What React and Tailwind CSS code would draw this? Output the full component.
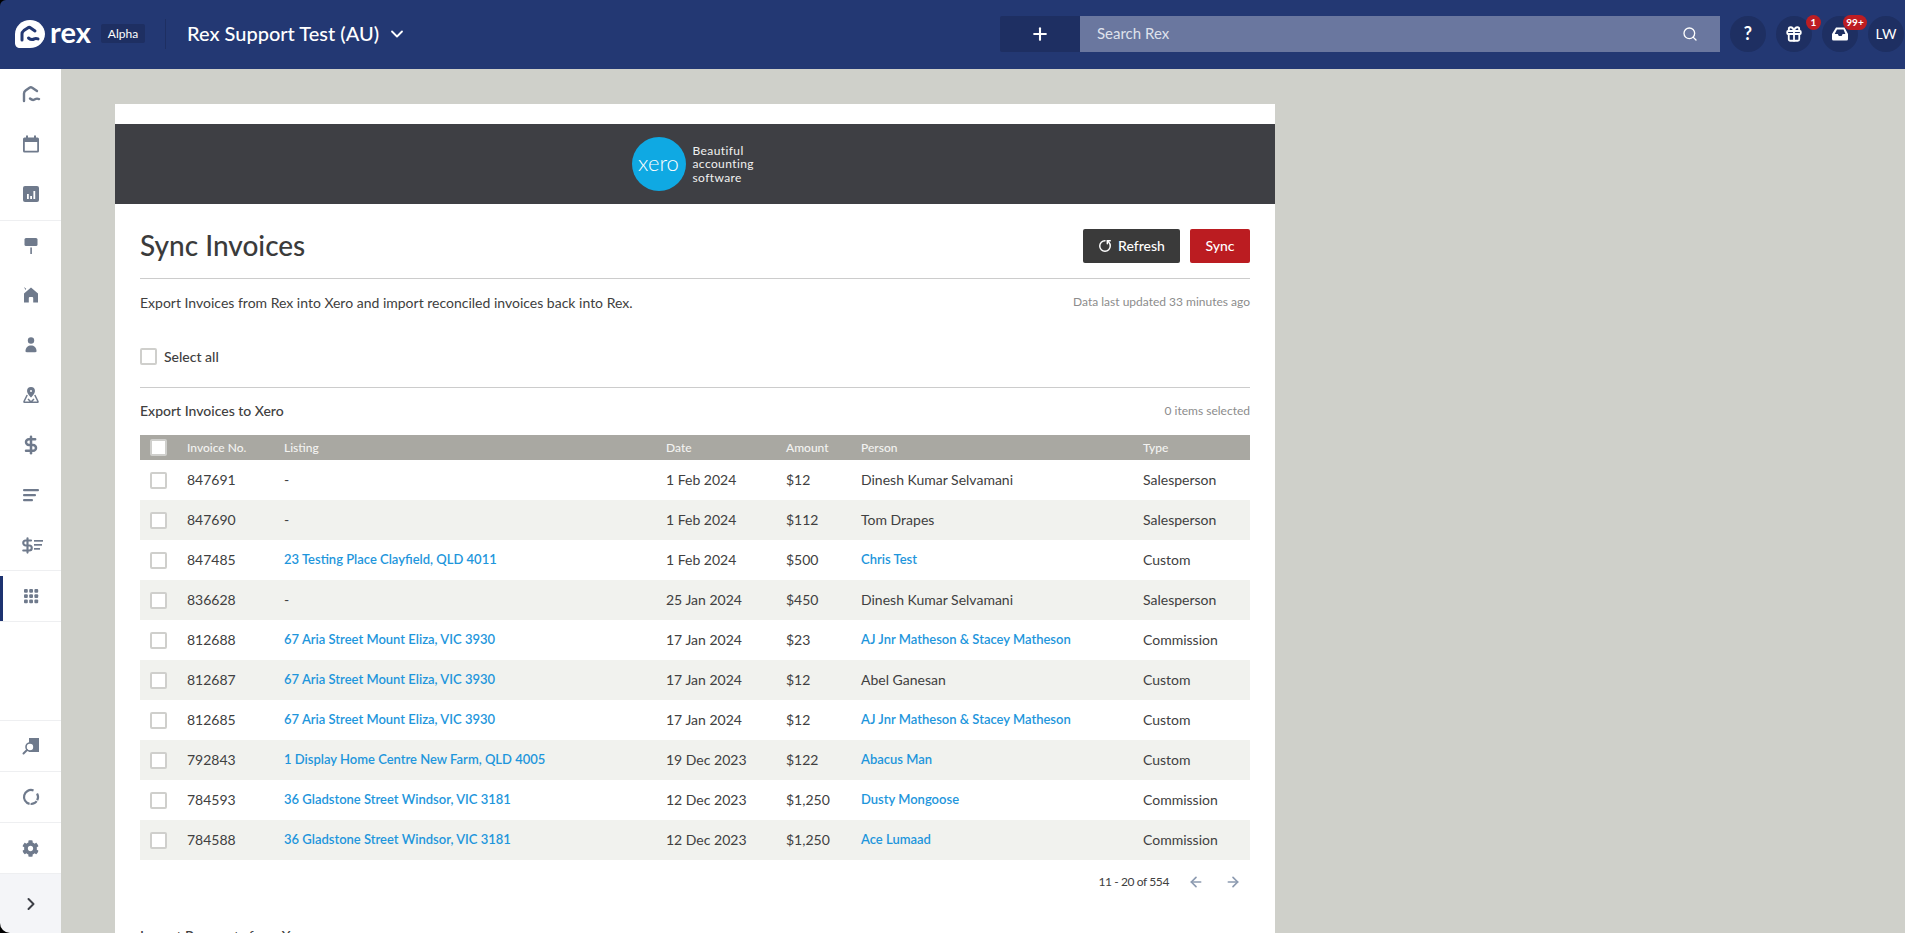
import React from 'react'
import { ChevronDown, ChevronRight, Plus, Search, Gift, RotateCw, ArrowLeft, ArrowRight, DollarSign } from 'lucide-react'
import { FaCog } from 'react-icons/fa'

const ROWS = [
  { no: '847691', listing: '-', date: '1 Feb 2024', amount: '$12', person: 'Dinesh Kumar Selvamani', type: 'Salesperson' },
  { no: '847690', listing: '-', date: '1 Feb 2024', amount: '$112', person: 'Tom Drapes', type: 'Salesperson' },
  { no: '847485', listing: '23 Testing Place Clayfield, QLD 4011', link: true, date: '1 Feb 2024', amount: '$500', person: 'Chris Test', personLink: true, type: 'Custom' },
  { no: '836628', listing: '-', date: '25 Jan 2024', amount: '$450', person: 'Dinesh Kumar Selvamani', type: 'Salesperson' },
  { no: '812688', listing: '67 Aria Street Mount Eliza, VIC 3930', link: true, date: '17 Jan 2024', amount: '$23', person: 'AJ Jnr Matheson & Stacey Matheson', personLink: true, type: 'Commission' },
  { no: '812687', listing: '67 Aria Street Mount Eliza, VIC 3930', link: true, date: '17 Jan 2024', amount: '$12', person: 'Abel Ganesan', type: 'Custom' },
  { no: '812685', listing: '67 Aria Street Mount Eliza, VIC 3930', link: true, date: '17 Jan 2024', amount: '$12', person: 'AJ Jnr Matheson & Stacey Matheson', personLink: true, type: 'Custom' },
  { no: '792843', listing: '1 Display Home Centre New Farm, QLD 4005', link: true, date: '19 Dec 2023', amount: '$122', person: 'Abacus Man', personLink: true, type: 'Custom' },
  { no: '784593', listing: '36 Gladstone Street Windsor, VIC 3181', link: true, date: '12 Dec 2023', amount: '$1,250', person: 'Dusty Mongoose', personLink: true, type: 'Commission' },
  { no: '784588', listing: '36 Gladstone Street Windsor, VIC 3181', link: true, date: '12 Dec 2023', amount: '$1,250', person: 'Ace Lumaad', personLink: true, type: 'Commission' },
]

const GREY = '#6f7a8c'

const RexMark = () => (
  <svg width="20" height="20" viewBox="0 0 20 20" fill="none" stroke={GREY} strokeWidth="2.4" strokeLinecap="round" strokeLinejoin="round">
    <path d="M3 17V9.5c0-1.3.5-2.2 1.6-3L8.5 3.7c.9-.6 1.8-.6 2.7 0L16 7" />
    <path d="M9 14.5c2 1.8 3.8 1.8 5.5.6.9-.6 2-.6 3.5 0" />
  </svg>
)

const CalendarIcon = () => (
  <svg width="20" height="20" viewBox="0 0 20 20" fill={GREY}>
    <path d="M5 1.5h2v2h6v-2h2v2h1.5A1.5 1.5 0 0 1 18 5v12a1.5 1.5 0 0 1-1.5 1.5h-13A1.5 1.5 0 0 1 2 17V5a1.5 1.5 0 0 1 1.5-1.5H5zM3.8 8v8.7h12.4V8z" />
  </svg>
)

const ChartIcon = () => (
  <svg width="20" height="20" viewBox="0 0 20 20">
    <rect x="2" y="2" width="16" height="16" rx="2" fill={GREY} />
    <path d="M6 10h1.8v5H6zM9.2 12h1.8v3H9.2zM12.4 7h1.8v8h-1.8z" fill="#fff" />
  </svg>
)

const SignIcon = () => (
  <svg width="20" height="20" viewBox="0 0 20 20" fill={GREY}>
    <rect x="3.5" y="2" width="13" height="8" rx="1.5" />
    <rect x="9.3" y="11.5" width="1.6" height="6.5" />
  </svg>
)

const HomeIcon = () => (
  <svg width="20" height="20" viewBox="0 0 20 20" fill={GREY}>
    <path d="M3 2l2.2 1.7L4.5 5zM10 2.5l7 6v9h-4.8V13a1 1 0 0 0-1-1H8.800a1 1 0 0 0-1 1v4.500H3v-9z" />
  </svg>
)

const PersonIcon = () => (
  <svg width="20" height="20" viewBox="0 0 20 20" fill={GREY}>
    <circle cx="10" cy="5.5" r="3.2" />
    <path d="M4.500 16c0-3.500 2.500-5.500 5.500-5.500s5.500 2 5.500 5.500c0 .8-.5 1.200-1.200 1.200H5.700c-.7 0-1.200-.4-1.200-1.200z" />
  </svg>
)

const PinPersonIcon = () => (
  <svg width="20" height="20" viewBox="0 0 20 20" fill="none" stroke={GREY} strokeWidth="1.5">
    <path d="M10 11.500C8 9.300 6.800 7.800 6.800 6a3.200 3.200 0 0 1 6.400 0c0 1.800-1.200 3.300-3.200 5.500z" fill={GREY} />
    <circle cx="10" cy="6" r="1" fill="#fff" stroke="none" />
    <path d="M6.200 10L3 16.500a.6.600 0 0 0 .5.8h13a.6.600 0 0 0 .5-.8L13.800 10M7 14l3 3 3-3" />
  </svg>
)

const LinesIcon = () => (
  <svg width="20" height="20" viewBox="0 0 20 20" fill={GREY}>
    <rect x="2" y="4" width="16" height="2.2" rx="1" />
    <rect x="2" y="9" width="13" height="2.2" rx="1" />
    <rect x="2" y="14" width="10" height="2.2" rx="1" />
  </svg>
)

const DollarLinesIcon = () => (
  <div className="flex items-center">
    <DollarSign size={17} strokeWidth={3} color={GREY} className="-mr-[2px]" />
    <svg width="9" height="14" viewBox="0 0 9 14" fill={GREY}>
      <rect x="0" y="2" width="9" height="1.7" />
      <rect x="0" y="6" width="8" height="1.7" />
      <rect x="0" y="10" width="6" height="1.7" />
    </svg>
  </div>
)

const AppsIcon = () => (
  <svg width="20" height="20" viewBox="0 0 20 20" fill={GREY}>
    {[3, 8.2, 13.4].map((y) =>
      [3, 8.2, 13.4].map((x) => <rect key={`${x}-${y}`} x={x} y={y} width="3.8" height="3.8" rx="1" />)
    )}
  </svg>
)

const SearchSquareIcon = () => (
  <svg width="20" height="20" viewBox="0 0 20 20">
    <rect x="8" y="2" width="10" height="14" fill={GREY} />
    <circle cx="9" cy="11" r="4" fill="#fff" stroke={GREY} strokeWidth="1.6" />
    <path d="M6 14l-3.500 3.500" stroke={GREY} strokeWidth="2" strokeLinecap="round" />
  </svg>
)

const SpinnerIcon = () => (
  <svg width="20" height="20" viewBox="0 0 20 20" fill="none" stroke={GREY} strokeWidth="2.2">
    <circle cx="10" cy="10" r="7" strokeDasharray="7 1 7 1 23 5" transform="rotate(-30 10 10)" />
  </svg>
)

const InboxIcon = () => (
  <svg width="20" height="20" viewBox="0 0 20 20" fill="#fff">
    <path d="M6 3.5h8.500L18 10v5a1.500 1.500 0 0 1-1.500 1.500h-13A1.500 1.500 0 0 1 2 15v-5zM7 5.500L4.700 10h3.100l1 2h2.800l1-2h2.800L13.500 5.500z" fillRule="evenodd" />
  </svg>
)

const RexLogo = () => (
  <svg width="30" height="28" viewBox="0 0 30 28">
    <path d="M15 0c8 0 15 6.200 15 14s-7 14-15 14H5c-3 0-5-2-5-5V14C0 6.200 7 0 15 0z" fill="#fff" />
    <g fill="none" stroke="#233873" strokeWidth="3" strokeLinecap="round" strokeLinejoin="round">
      <path d="M7 20v-6c0-1.500.6-2.500 1.800-3.400l3.900-2.700c1-.7 2-.7 3 0l4.300 3" />
      <path d="M13.500 18c2.300 2 4 2 5.800.9 1-.6 2-.6 3.700 0" />
    </g>
  </svg>
)

const SideItem = ({ children, active, className = '' }) => (
  <div className={`relative flex items-center justify-center ${className}`}>
    {active && <div className="absolute left-0 top-[5px] bottom-0 w-[3px] bg-[#1d3270]" />}
    {children}
  </div>
)

const Check = () => (
  <span className="block w-[17px] h-[17px] rounded-[2px] border-2 border-[#cfcfcc] bg-white" />
)

const RoundBtn = ({ children }) => (
  <div className="relative flex items-center justify-center w-9 h-9 rounded-full bg-[#1e2f62] text-white">{children}</div>
)

const LINK = 'text-[13px] font-semibold text-[#1e96dc]'

export default function App() {
  return (
    <div className="h-[933px] overflow-hidden flex flex-col bg-black text-[#404040] font-['Lato','Liberation_Sans',sans-serif]">
      {/* Top bar */}
      <header className="h-[69px] shrink-0 flex items-center rounded-tl-[6px] bg-[#233873] pl-[15px] pb-[2px] text-white">
        <RexLogo />
        <span className="ml-[5px] w-[41px] text-[29px] leading-none font-bold -mt-[4px]">rex</span>
        <span className="ml-[10px] flex items-center justify-center w-11 h-[19px] rounded-[2px] bg-[#1e2f62] text-[12px]">Alpha</span>
        <div className="ml-5 w-px h-[30px] bg-[#1e2f62]" />
        <span className="ml-[21px] -mt-[1px] text-[20px] font-medium">Rex Support Test (AU)</span>
        <ChevronDown size={20} strokeWidth={2.2} className="ml-[8px]" />

        <div className="ml-auto flex items-center h-9">
          <div className="flex items-center justify-center w-20 h-9 rounded-l-[2px] bg-[#1e2f62]">
            <Plus size={20} strokeWidth={2.5} />
          </div>
          <div className="flex items-center justify-between w-[640px] h-9 bg-[#6a779f] pl-[17px] pr-[22px] text-[15px] text-[#dfe2ec]">
            <span>Search Rex</span>
            <Search size={16} color="#fff" />
          </div>
          <div className="ml-[10px] flex items-center gap-[10px] pr-px">
            <RoundBtn><span className="text-[18px] font-bold">?</span></RoundBtn>
            <RoundBtn>
              <Gift size={18} strokeWidth={2.4} />
              <span className="absolute -top-[1px] left-[30px] flex items-center justify-center w-[15px] h-[15px] rounded-full bg-[#bd1d22] text-[10px] font-bold">1</span>
            </RoundBtn>
            <RoundBtn>
              <InboxIcon />
              <span className="absolute -top-[1px] left-[21px] flex items-center justify-center w-6 h-[15px] rounded-full bg-[#bd1d22] text-[10px] font-bold">99+</span>
            </RoundBtn>
            <RoundBtn><span className="text-[14px]">LW</span></RoundBtn>
          </div>
        </div>
      </header>

      <div className="flex-1 flex min-h-0">
        {/* Side nav */}
        <aside className="w-[61px] shrink-0 flex flex-col justify-between bg-white">
          <div>
            <div className="border-b border-[#eeeff1] pb-px">
              <SideItem className="h-[50px]"><RexMark /></SideItem>
              <SideItem className="h-[50px]"><CalendarIcon /></SideItem>
              <SideItem className="h-[50px]"><ChartIcon /></SideItem>
            </div>
            <div className="border-b border-[#eeeff1]">
              <SideItem className="h-[49px]"><SignIcon /></SideItem>
              <SideItem className="h-[50px]"><HomeIcon /></SideItem>
              <SideItem className="h-[50px]"><PersonIcon /></SideItem>
              <SideItem className="h-[50px]"><PinPersonIcon /></SideItem>
              <SideItem className="h-[50px]"><DollarSign size={20} strokeWidth={3} color={GREY} /></SideItem>
              <SideItem className="h-[50px]"><LinesIcon /></SideItem>
              <SideItem className="h-[50px]"><DollarLinesIcon /></SideItem>
            </div>
            <div className="border-b border-[#eeeff1]">
              <SideItem active className="h-[50px]"><AppsIcon /></SideItem>
            </div>
          </div>
          <div>
            <SideItem className="h-[51px] border-t border-[#eeeff1]"><SearchSquareIcon /></SideItem>
            <SideItem className="h-[51px] border-t border-[#eeeff1]"><SpinnerIcon /></SideItem>
            <SideItem className="h-[51px] border-t border-[#eeeff1]"><FaCog size={17} color={GREY} /></SideItem>
            <div className="bg-black">
              <div className="h-[60px] flex items-center justify-center rounded-bl-[10px] border-t border-[#eeeff1] bg-[#f4f5f8]">
                <ChevronRight size={20} strokeWidth={2.4} color="#3c3f46" />
              </div>
            </div>
          </div>
        </aside>

        {/* Page */}
        <main className="flex-1 min-w-0 bg-[#cfd0ca] pl-[54px] pt-[35px]">
          <div className="w-[1160px] bg-white pt-5">
            <div className="h-20 flex items-center justify-center gap-[7px] bg-[#3e3f44] pl-[2px]">
              <div className="flex items-center justify-center w-[54px] h-[54px] rounded-full bg-[#0fa9e3] text-white text-[22px] leading-none font-light pb-[3px]">xero</div>
              <div className="w-[68px] text-[12px] leading-[13.5px] tracking-[0.4px] text-[#f1f1f1]">Beautiful accounting software</div>
            </div>

            <div className="px-[25px]">
              <div className="h-[75px] pt-[10px] flex items-center justify-between border-b border-[#cccccc]">
                <h1 className="-mt-[3px] text-[28px] font-medium text-[#3b3b3b]">Sync Invoices</h1>
                <div className="flex gap-[10px]">
                  <button className="flex items-center justify-center gap-[6px] w-[97px] h-[34px] pb-px rounded-[2px] bg-[#3a3a3a] text-[14px] font-medium text-white">
                    <RotateCw size={14} strokeWidth={2.5} className="-scale-x-100 rotate-90" />
                    Refresh
                  </button>
                  <button className="w-[60px] h-[34px] pb-px rounded-[2px] bg-[#bb1c21] text-[14px] font-medium text-white">Sync</button>
                </div>
              </div>

              <div className="flex items-center justify-between h-[46px]">
                <p className="text-[14px]">Export Invoices from Rex into Xero and import reconciled invoices back into Rex.</p>
                <span className="text-[12px] text-[#8c8c8c]">Data last updated 33 minutes ago</span>
              </div>

              <div className="flex items-center gap-[7px] pt-[21px] pb-[20px] border-b border-[#cccccc]">
                <Check />
                <span className="text-[14px] font-medium">Select all</span>
              </div>

              <div className="flex items-center justify-between h-[47px] pb-[2px]">
                <span className="text-[14px] font-medium">Export Invoices to Xero</span>
                <span className="text-[12px] text-[#8c8c8c]">0 items selected</span>
              </div>

              <table className="w-full table-fixed border-collapse text-[14px]">
                <colgroup>
                  <col className="w-[47px]" />
                  <col className="w-[97px]" />
                  <col className="w-[382px]" />
                  <col className="w-[120px]" />
                  <col className="w-[75px]" />
                  <col className="w-[282px]" />
                  <col />
                </colgroup>
                <thead>
                  <tr className="h-[25px] bg-[#a9a8a2] text-left text-[12px] text-[#f3f3f1]">
                    <th className="pl-[10px]"><Check /></th>
                    <th className="font-medium">Invoice No.</th>
                    <th className="font-medium">Listing</th>
                    <th className="font-medium">Date</th>
                    <th className="font-medium">Amount</th>
                    <th className="font-medium">Person</th>
                    <th className="font-medium">Type</th>
                  </tr>
                </thead>
                <tbody>
                  {ROWS.map((r, i) => (
                    <tr key={r.no} className={`h-10 ${i % 2 ? 'bg-[#f1f2ee]' : 'bg-white'}`}>
                      <td className="pl-[10px]"><Check /></td>
                      <td className="pb-[2px]">{r.no}</td>
                      <td className={r.link ? LINK : 'pb-[2px]'}>{r.listing}</td>
                      <td className="pb-[2px]">{r.date}</td>
                      <td className="pb-[2px]">{r.amount}</td>
                      <td className={r.personLink ? LINK : 'pb-[2px]'}>{r.person}</td>
                      <td className="pb-[2px]">{r.type}</td>
                    </tr>
                  ))}
                </tbody>
              </table>

              <div className="h-[45px] flex items-center justify-end pr-[9px] pb-[2px] text-[12px] tracking-[-0.4px]">
                <span>11 - 20 of 554</span>
                <ArrowLeft size={16} strokeWidth={2.5} color="#8c9ab0" className="ml-[19px]" />
                <ArrowRight size={16} strokeWidth={2.5} color="#8c9ab0" className="ml-[21px]" />
              </div>

              <div className="mt-5 text-[14px] font-medium">Import Payments from Xero</div>
            </div>
          </div>
        </main>
      </div>
    </div>
  )
}
